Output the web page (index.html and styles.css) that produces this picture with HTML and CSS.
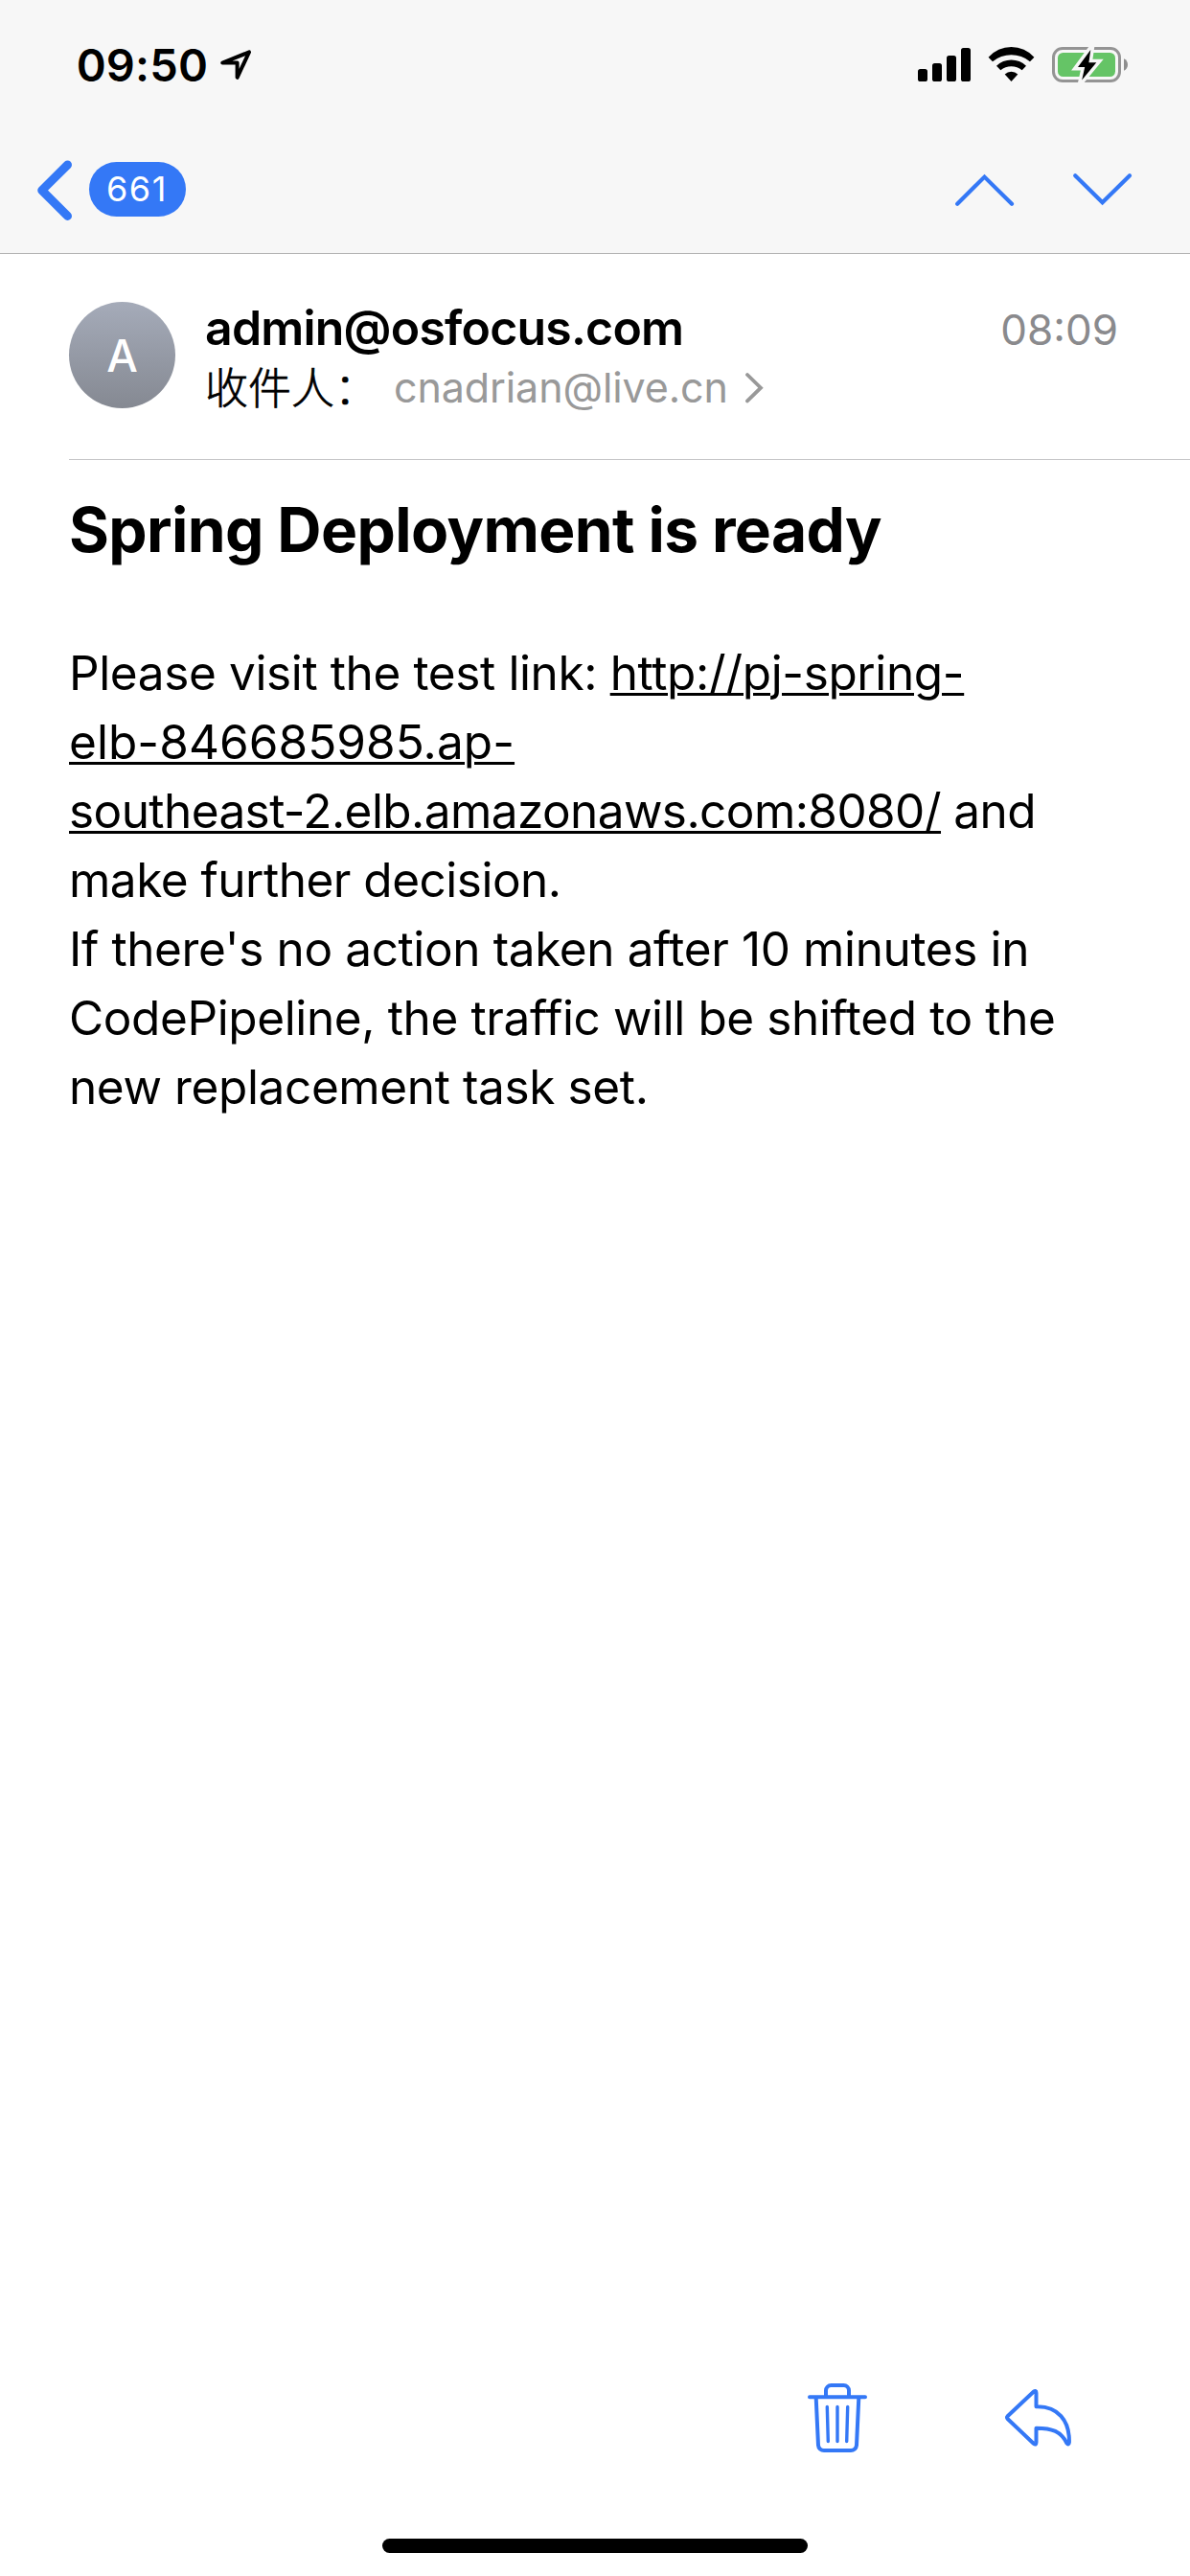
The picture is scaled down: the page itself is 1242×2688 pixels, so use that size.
FILE: index.html
```html
<!DOCTYPE html>
<html lang="zh-CN">
<head>
<meta charset="utf-8">
<title>Spring Deployment is ready</title>
<link rel="stylesheet" href="styles.css">
</head>
<body>
<div class="screen">
  <header class="top">
    <div class="status">
      <span class="status-time">09:50</span>
      <svg class="location" width="34" height="34" viewBox="0 0 34 34"><path d="M3.2 14.5 31 3.4 18.6 29.8V14.6Z" fill="none" stroke="#000" stroke-width="4" stroke-linejoin="round"/></svg>
      <div class="status-icons">
        <svg width="55" height="40" viewBox="0 0 55 40">
          <rect x="0" y="24" width="10" height="13" rx="2.6"/><rect x="15" y="18" width="10" height="19" rx="2.6"/><rect x="30" y="10" width="10" height="27" rx="2.6"/><rect x="45" y="2" width="10" height="35" rx="2.6"/>
        </svg>
        <svg width="49" height="40" viewBox="0 0 49 40">
          <path d="M.6 11.7A32 32 0 0 1 48.4 11.7L44 16.2A30.6 30.6 0 0 0 5 16.2Z"/>
          <path d="M9 20.8A22 22 0 0 1 40 20.8L35.7 25.2A18 18 0 0 0 13.3 25.2Z"/>
          <path d="M17.7 29.4A10 10 0 0 1 31.3 29.4L24.5 37Z"/>
        </svg>
        <svg width="81" height="40" viewBox="0 0 81 40">
          <rect x="2.5" y="2.5" width="69" height="34" rx="9.5" fill="none" stroke="#949494" stroke-width="3"/>
          <rect x="7" y="7" width="60" height="25" rx="5.5" fill="#65c466"/>
          <path d="M76 13.2C78.6 14.3 80 16.8 80 19.5S78.6 24.7 76 25.8Z" fill="#8e8e8e"/>
          <path class="bolt" d="M41.3 4 39.4 17.3H47.3L32.2 35.5 35.2 22.1H28Z"/>
        </svg>
      </div>
    </div>
    <nav class="nav">
      <svg width="40" height="65" viewBox="0 0 40 65"><path d="M33.5 7 6.7 33.6 33.5 60.4" fill="none" stroke="#3478f6" stroke-width="9" stroke-linecap="round" stroke-linejoin="round"/></svg>
      <span class="badge">661</span>
      <div class="nav-arrows">
        <svg width="65" height="39" viewBox="0 0 65 39"><path d="M4.2 34.8 32.5 6.6 61 34.8"/></svg>
        <svg width="65" height="39" viewBox="0 0 65 39"><path d="M4.2 5.2 32.6 33.3 61 5.2"/></svg>
      </div>
    </nav>
  </header>

  <section class="sender">
    <div class="avatar">A</div>
    <div class="sender-info">
      <div class="sender-row">
        <strong class="from">admin@osfocus.com</strong>
        <time class="sent">08:09</time>
      </div>
      <div class="to-row">
        <span class="to-label">收件人：</span>
        <span class="to">cnadrian@live.cn</span>
        <svg class="to-arrow" width="20" height="34" viewBox="0 0 20 34"><path d="M3 4 17 17.7 3 31.4" fill="none" stroke="#999" stroke-width="3.8" stroke-linecap="round"/></svg>
      </div>
    </div>
  </section>

  <main class="message">
    <h1>Spring Deployment is ready</h1>
    <p>Please visit the test link: <a>http://pj-spring-<br><span class="wide">elb-846685985.ap-</span><br><span class="tight">southeast-2.elb.amazonaws.com:8080/</span></a><span class="tight"> and</span><br><span class="snug">make further decision.</span><br>If there's no action taken after 10 minutes in<br>CodePipeline, the traffic will be shifted to the<br>new replacement task set.</p>
  </main>

  <footer class="toolbar">
    <svg width="64" height="74" viewBox="0 0 64 74">
      <path d="M3 15.3H61M20 15V8.5A5.5 5.5 0 0 1 25.5 3H38.5A5.5 5.5 0 0 1 44 8.5V15M9.7 16 12 65.5A6 6 0 0 0 18 71H46A6 6 0 0 0 52 65.5L54.3 16"/>
      <path class="ribs" d="M21.3 25.5 22.3 61.5M32 25.5V61.5M42.7 25.5 41.7 61.5"/>
    </svg>
    <svg width="72" height="62" viewBox="0 0 72 62">
      <path d="M3.6 29.3 30.7 3.7Q33.5 1.8 33.5 5V19.3C56 18.5 68.5 34 67.9 56.5Q67.5 60 65.3 57.3C59.5 45 50 41.7 33.5 41.7V56.5Q33.5 60 30.7 57.7L3.6 32Q2.4 30.6 3.6 29.3Z"/>
    </svg>
  </footer>
  <div class="home"></div>
</div>
</body>
</html>
```
FILE: styles.css
```css
* { box-sizing: border-box; }
body {
  margin: 0;
  background: #fff;
  color: #000;
  font-family: Inter, "Noto Sans CJK SC", sans-serif;
}
svg { display: block; flex: none; }
.screen {
  display: flex;
  flex-direction: column;
  width: 1242px;
  height: 2688px;
}
.top {
  height: 265px;
  background: #f7f7f7;
  border-bottom: 1px solid #b2b2b2;
}
.status {
  display: flex;
  align-items: center;
  height: 98px;
  padding: 38px 64px 0 79.7px;
}
.status-time {
  font-size: 47px;
  font-weight: 600;
  line-height: 60px;
  letter-spacing: .15px;
}
.location { margin-left: 12px; }
.status-icons {
  display: flex;
  gap: 17.5px;
  margin-left: auto;
}
.bolt {
  fill: #000;
  stroke: #f7f7f7;
  stroke-width: 7;
  stroke-miterlimit: 8;
  paint-order: stroke;
}
.nav {
  display: flex;
  align-items: center;
  height: 166px;
  padding: 33px 59px 0 37px;
}
.badge {
  width: 101px;
  height: 57px;
  margin-left: 16px;
  padding-left: 18px;
  border-radius: 28.5px;
  background: #3478f6;
  color: #fff;
  font-size: 36px;
  line-height: 57px;
  letter-spacing: 1.5px;
}
.nav-arrows {
  display: flex;
  gap: 58px;
  margin-left: auto;
  fill: none;
  stroke: #3478f6;
  stroke-width: 4.2;
  stroke-linecap: round;
}
.sender {
  display: flex;
  height: 215px;
  margin-left: 72px;
  padding: 46px 75px 0 0;
  border-bottom: 1px solid #c6c6c8;
}
.avatar {
  display: flex;
  align-items: center;
  justify-content: center;
  flex: none;
  width: 111px;
  height: 111px;
  margin: 4px 31px 0 0;
  border-radius: 50%;
  background: linear-gradient(#a5abb9, #858992);
  color: #fff;
  font-size: 46px;
  font-weight: 500;
}
.sender-info { flex: 1; }
.sender-row {
  display: flex;
  align-items: baseline;
  justify-content: space-between;
  height: 63px;
  line-height: 62px;
}
.from {
  font-size: 50px;
  font-weight: 600;
  letter-spacing: -.8px;
}
.sent {
  color: #8a8a8d;
  font-size: 44px;
}
.to-row {
  display: flex;
  align-items: center;
  height: 60px;
  line-height: 60px;
}
.to-label {
  width: 197px;
  margin-top: -3px;
  font-family: "Noto Sans CJK SC", sans-serif;
  font-size: 45px;
  font-weight: 300;
  -webkit-text-stroke: .7px #000;
  white-space: nowrap;
}
.to {
  color: #999;
  font-size: 43px;
  letter-spacing: -.1px;
}
.to-arrow { margin-left: 17px; }
.message {
  flex: 1;
  padding: 33px 72px 0;
}
h1 {
  margin: 0 0 73px;
  font-size: 64px;
  line-height: 80px;
  letter-spacing: -.6px;
}
p {
  margin: 0;
  font-size: 49.5px;
  line-height: 72px;
  letter-spacing: -.38px;
  white-space: nowrap;
}
a {
  text-decoration: underline;
  text-decoration-thickness: 3px;
  text-underline-offset: 3px;
}
.wide { letter-spacing: .07px; }
.tight { letter-spacing: -.58px; }
.snug { letter-spacing: -.5px; }
.toolbar {
  display: flex;
  align-items: center;
  justify-content: flex-end;
  gap: 142px;
  height: 74px;
  margin-bottom: 89px;
  padding-right: 122px;
  fill: none;
  stroke: #3478f6;
  stroke-width: 4;
  stroke-linecap: round;
  stroke-linejoin: round;
}
.ribs { stroke-width: 3.4px; }
.home {
  width: 444px;
  height: 15px;
  margin: 0 auto 24px;
  border-radius: 7.5px;
  background: #000;
}
```
